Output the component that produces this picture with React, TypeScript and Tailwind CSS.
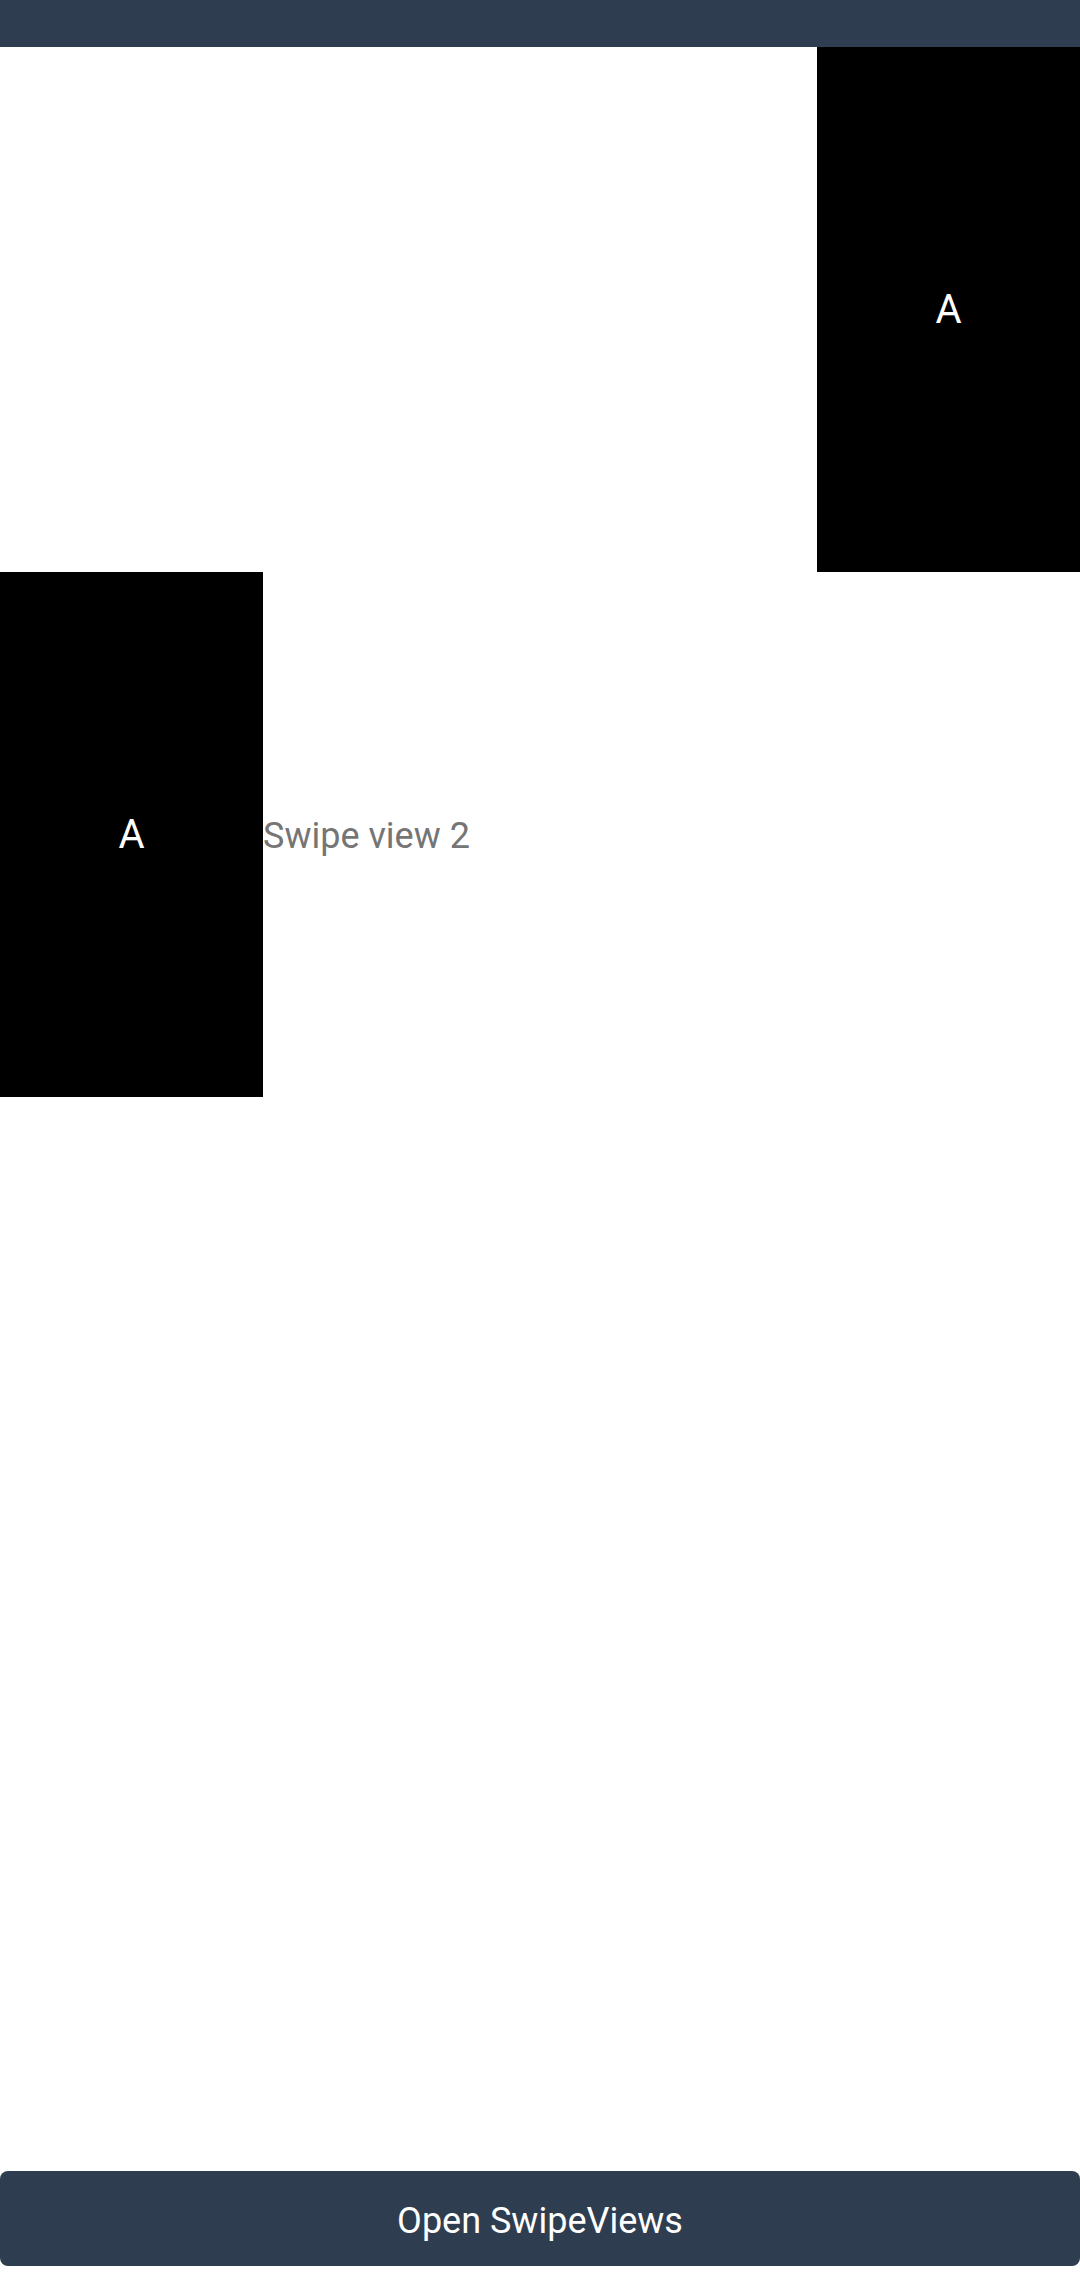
import React from 'react';

const Slide: React.FC<{ label: string }> = ({ label }) => (
  <div className="w-[263px] h-[525px] bg-black flex items-center justify-center shrink-0">
    <span className="text-white text-[40px] leading-none">{label}</span>
  </div>
);

const App: React.FC = () => {
  return (
    <div className="w-[1080px] h-[2289px] bg-white flex flex-col" style={{ fontFamily: 'Roboto, "Noto Sans", sans-serif' }}>
      <div className="h-[47px] bg-[#2e3e50] shrink-0"></div>

      <div className="flex justify-end">
        <Slide label="A" />
      </div>

      <div className="flex items-center">
        <Slide label="A" />
        <span className="text-[#757575] text-[36px] leading-none pt-[3px]">Swipe view 2</span>
      </div>

      <div className="flex-1"></div>

      <button className="h-[95px] w-full bg-[#2e3e50] rounded-[8px] text-white text-[36px] leading-none pt-[4px] flex items-center justify-center mb-[23px]">
        Open SwipeViews
      </button>
    </div>
  );
};

export default App;
